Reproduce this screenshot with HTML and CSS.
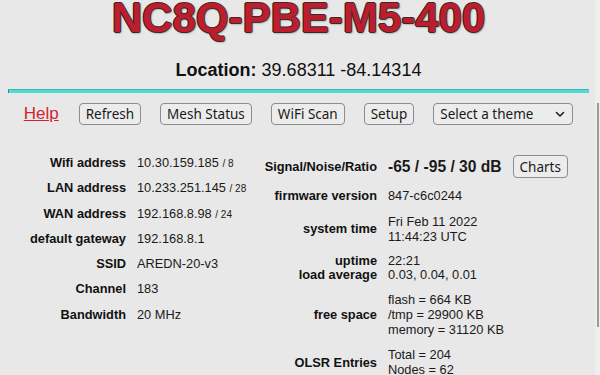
FILE: index.html
```html
<!DOCTYPE html>
<html lang="en">
<head>
<meta charset="utf-8">
<title>NC8Q-PBE-M5-400 status</title>
<link rel="stylesheet" href="styles.css">
</head>
<body>
<div class="page">
  <h1 class="title">NC8Q-PBE-M5-400</h1>
  <div class="location"><b>Location:</b> 39.68311 -84.14314</div>
  <div class="rule"></div>
  <nav class="nav">
    <a class="help" href="#">Help</a>
    <button class="btn">Refresh</button>
    <button class="btn">Mesh Status</button>
    <button class="btn">WiFi Scan</button>
    <button class="btn">Setup</button>
    <div class="select">
      <span>Select a theme</span>
      <svg width="10" height="7" viewBox="0 0 10 7"><path d="M1.5 1.5 L5 5 L8.5 1.5" fill="none" stroke="#222" stroke-width="1.6" stroke-linecap="round" stroke-linejoin="round"/></svg>
    </div>
  </nav>
  <div class="tables">
    <div class="grid left">
      <div class="lbl">Wifi address</div><div class="val">10.30.159.185 <small>/ 8</small></div>
      <div class="lbl">LAN address</div><div class="val">10.233.251.145 <small>/ 28</small></div>
      <div class="lbl">WAN address</div><div class="val">192.168.8.98 <small>/ 24</small></div>
      <div class="lbl">default gateway</div><div class="val">192.168.8.1</div>
      <div class="lbl">SSID</div><div class="val">AREDN-20-v3</div>
      <div class="lbl">Channel</div><div class="val">183</div>
      <div class="lbl">Bandwidth</div><div class="val">20 MHz</div>
    </div>
    <div class="grid right">
      <div class="lbl">Signal/Noise/Ratio</div>
      <div class="val signal"><b>-65 / -95 / 30 dB</b><button class="btn charts">Charts</button></div>
      <div class="lbl">firmware version</div><div class="val">847-c6c0244</div>
      <div class="lbl">system time</div><div class="val">Fri Feb 11 2022<br>11:44:23 UTC</div>
      <div class="lbl tight">uptime<br>load average</div><div class="val tight">22:21<br>0.03, 0.04, 0.01</div>
      <div class="lbl">free space</div><div class="val">flash = 664 KB<br>/tmp = 29900 KB<br>memory = 31120 KB</div>
      <div class="lbl">OLSR Entries</div><div class="val">Total = 204<br>Nodes = 62</div>
    </div>
  </div>
</div>
<div class="scrollbar"><div class="thumb"></div></div>
</body>
</html>
```
FILE: styles.css
```css
html, body {
  margin: 0;
  padding: 0;
  height: 100%;
  overflow: hidden;
}
body {
  background: #e8e8e8;
  color: #111;
  font-family: "Liberation Sans", Arial, sans-serif;
}
.page {
  padding: 0 11px 0 8px;
}
.title {
  margin: -2px 0 0;
  text-align: center;
  font-size: 42px;
  line-height: 40px;
  font-weight: bold;
  color: #bd1d2d;
  text-shadow: 1px 0 0 #3a2a2a, -1px 0 0 #3a2a2a, 0 1px 0 #3a2a2a, 0 -1px 0 #3a2a2a, 1px 1px 2px #555;
}
.location {
  margin-top: 22px;
  text-align: center;
  font-size: 18px;
  line-height: 21px;
}
.rule {
  margin-top: 8px;
  height: 3px;
  background: #52dbd3;
  border-top: 1px solid #3fb8b1;
  border-left: 1px solid #2f8f8a;
}
.nav {
  margin-top: 10px;
  display: flex;
  justify-content: center;
  align-items: center;
  gap: 19px;
}
.help {
  color: #d2232f;
  font-size: 17px;
  text-decoration: underline;
  margin-right: 1px;
}
.btn {
  font-family: "Noto Sans", "Open Sans", sans-serif;
  font-size: 13.5px;
  color: #1a1a1a;
  background: #ececec;
  border: 1px solid #8c8c8c;
  border-radius: 4px;
  height: 22px;
  padding: 0 6px;
  line-height: 20px;
  margin: 0;
}
.select {
  font-family: "Noto Sans", "Open Sans", sans-serif;
  font-size: 13.5px;
  color: #1a1a1a;
  background: #ececec;
  border: 1px solid #8c8c8c;
  border-radius: 4px;
  height: 20px;
  width: 125px;
  padding: 0 7px 0 6px;
  display: flex;
  align-items: center;
  justify-content: space-between;
}
.tables {
  display: flex;
  margin-top: 30px;
  padding-left: 20px;
}
.grid {
  display: grid;
  column-gap: 11px;
  row-gap: 10.5px;
  align-items: center;
  font-size: 12.8px;
  line-height: 15px;
}
.left {
  width: 234px;
  grid-template-columns: 98px auto;
  grid-auto-rows: 15px;
  row-gap: 10.3px;
  align-content: start;
}
.right {
  grid-template-columns: 115px auto;
  row-gap: 10.3px;
}
.lbl {
  font-weight: bold;
  text-align: right;
  white-space: nowrap;
}
.val {
  white-space: nowrap;
  color: #1a1a1a;
}
.val small {
  font-size: 10px;
  line-height: 0;
}
.tight {
  line-height: 14px;
}
.signal {
  display: flex;
  align-items: center;
}
.signal b {
  font-size: 15.6px;
}
.charts {
  margin-left: 11px;
  height: 23px;
}
.scrollbar {
  position: fixed;
  top: 0;
  right: 0;
  width: 5px;
  height: 100%;
  background: #efefef;
}
.thumb {
  margin-top: 103px;
  margin-left: 2px;
  width: 2px;
  height: 224px;
  background: #9a9a9a;
}
```
